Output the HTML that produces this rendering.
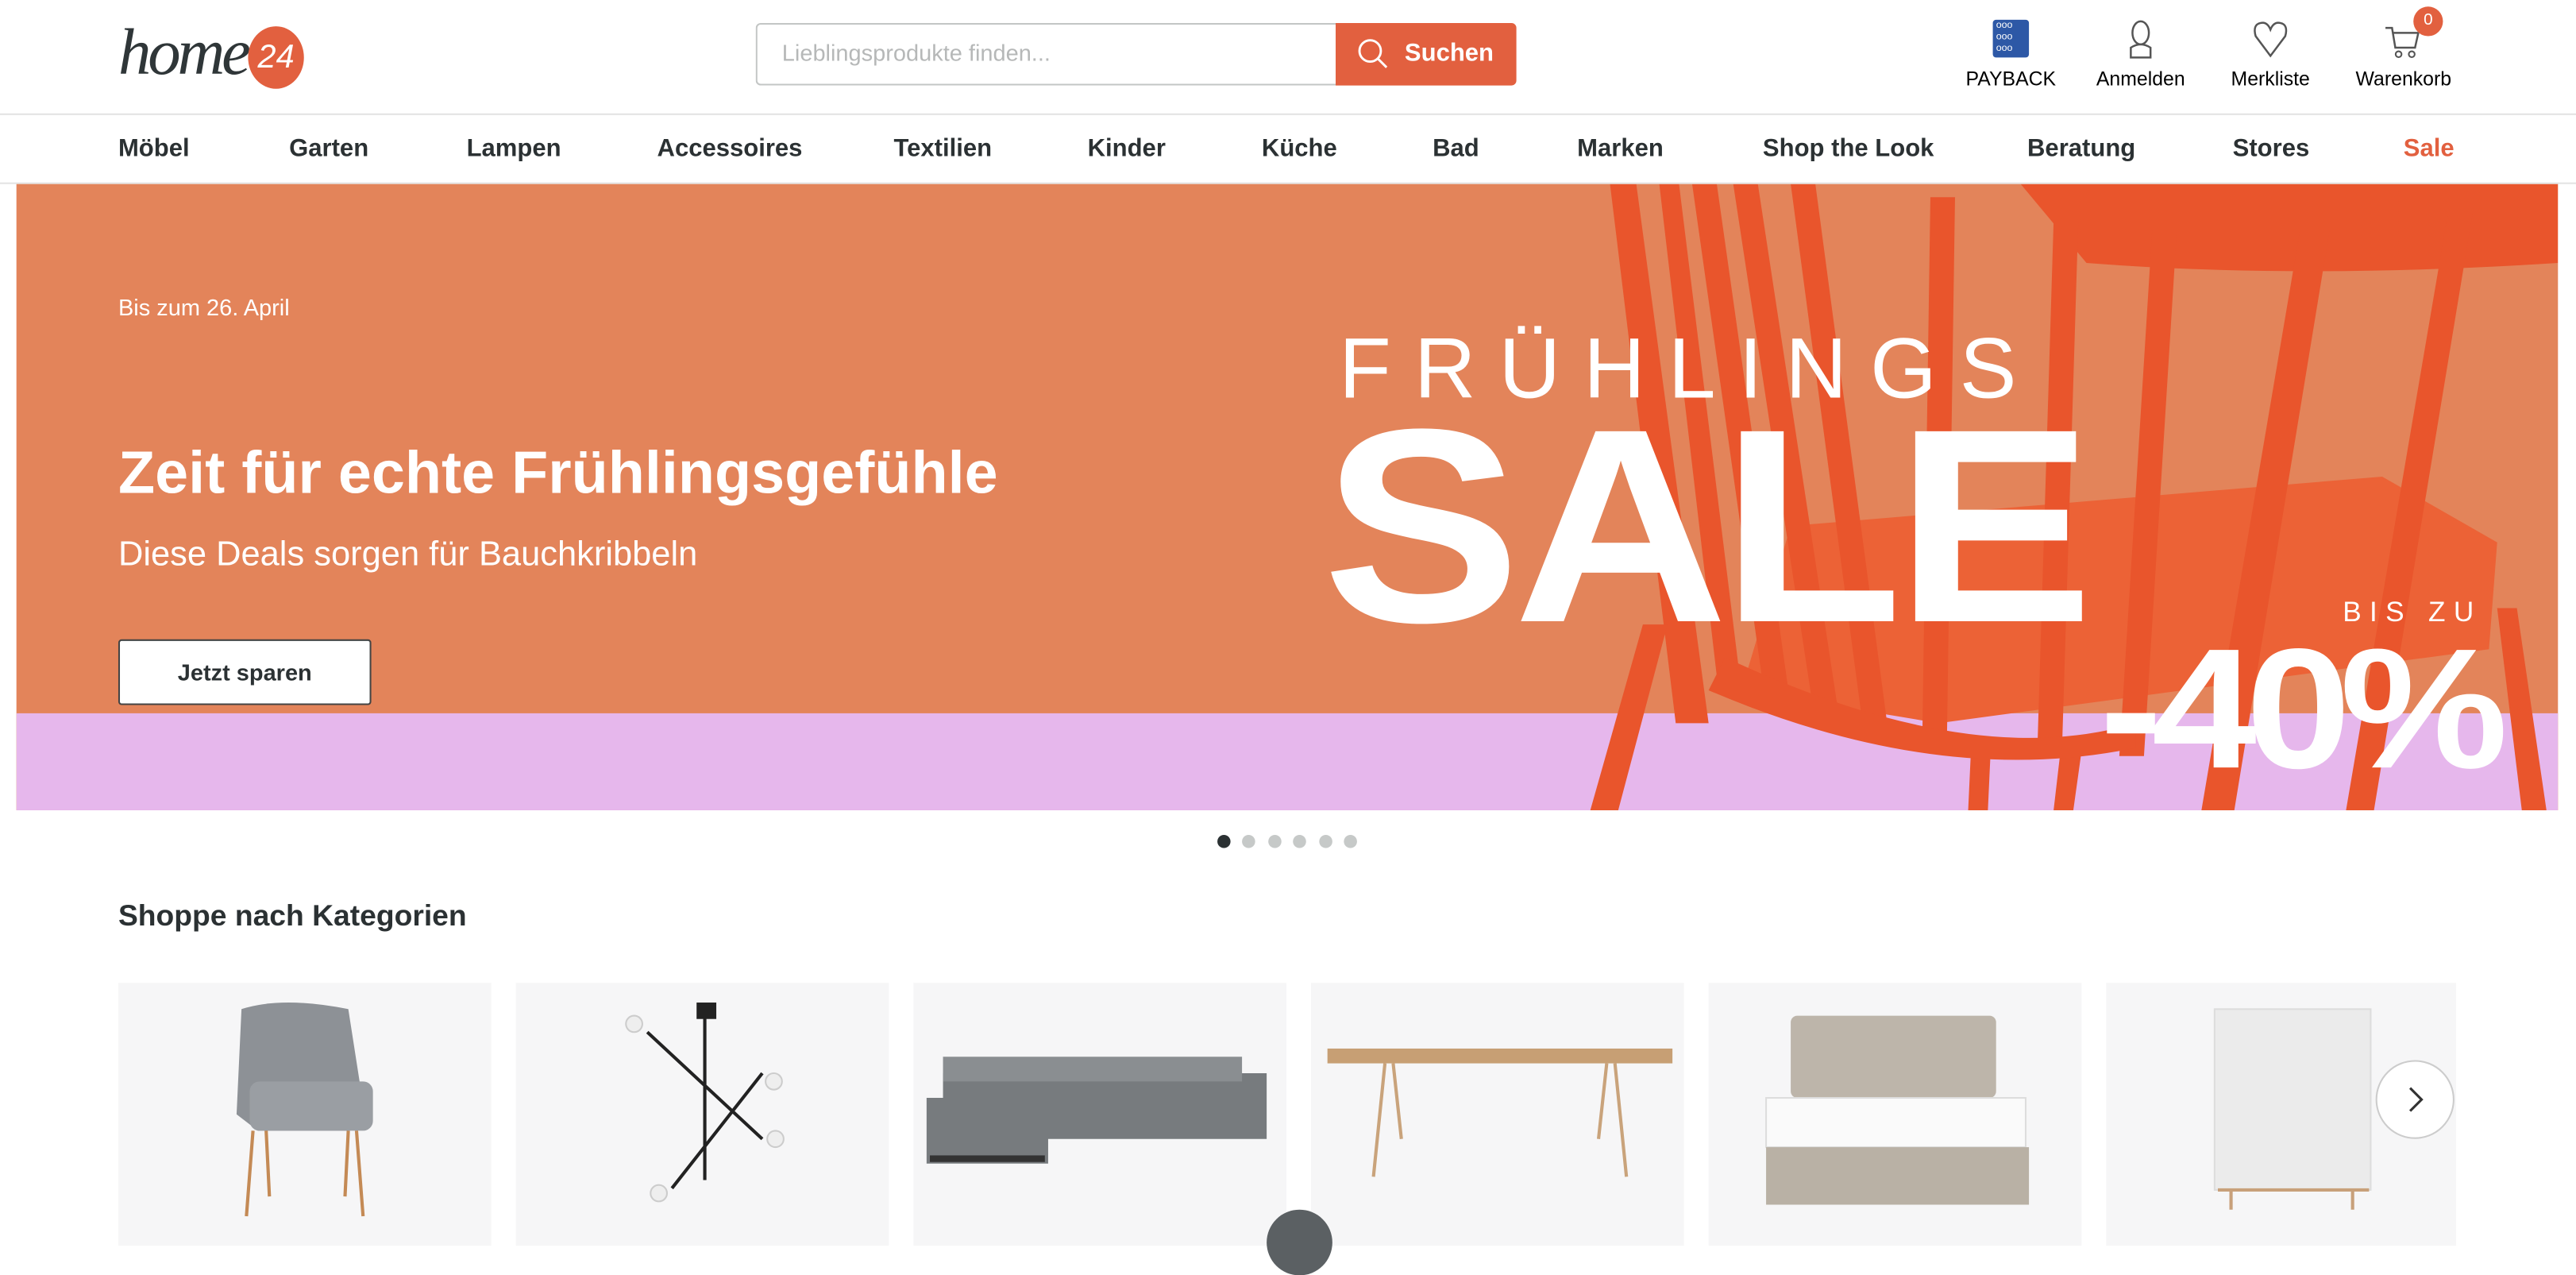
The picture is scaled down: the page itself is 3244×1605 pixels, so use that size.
<!DOCTYPE html>
<html><head><meta charset="utf-8">
<style>
html,body{margin:0;padding:0;width:3244px;height:1554px;overflow:hidden;background:#fff}
#w{position:absolute;left:0;top:0;width:1568px;height:751px;transform:scale(2.0689);transform-origin:0 0;font-family:"Liberation Sans",sans-serif;color:#2b3133}
.a{position:absolute}
.nav span{position:absolute;top:82px;font-weight:bold;font-size:15px;color:#2b3133}
.ic{position:absolute;top:41px;font-size:12px;color:#000;transform:translateX(-50%);white-space:nowrap}
.card{position:absolute;top:598px;height:160px;background:#f6f6f7}
</style></head><body><div id="w">
<div class="a" style="left:72px;top:10px;font-family:'Liberation Serif',serif;font-style:italic;font-size:40px;letter-spacing:-2px;color:#2f3638;line-height:44px">home</div>
<div class="a" style="left:151px;top:16px;width:34px;height:38px;border-radius:50%;background:#e2603f;color:#fff;font-style:italic;font-size:20px;text-align:center;line-height:38px">24</div>
<div class="a" style="left:460px;top:14px;width:352px;height:36px;border:1px solid #c3c6c5;border-right:none;border-radius:3px 0 0 3px"></div>
<div class="a" style="left:476px;top:24px;font-size:14px;color:#b6b8b8">Lieblingsprodukte finden...</div>
<div class="a" style="left:813px;top:14px;width:110px;height:38px;background:#e2603f;border-radius:0 3px 3px 0"></div>
<svg class="a" style="left:826px;top:23px" width="20" height="20" viewBox="0 0 20 20"><circle cx="8" cy="8" r="6.5" fill="none" stroke="#fff" stroke-width="1.4"/><path d="M12.5 12.5L18 18" stroke="#fff" stroke-width="1.4"/></svg>
<div class="a" style="left:855px;top:24px;font-size:15px;font-weight:bold;color:#fff">Suchen</div>
<div class="a" style="left:1213px;top:12px;width:22px;height:23px;background:#2d58a6;border-radius:2px"></div>
<div class="a" style="left:1215px;top:13px;font-size:6px;color:#fff;line-height:7px;letter-spacing:0">ooo<br>ooo<br>ooo</div>
<svg class="a" style="left:1293px;top:12px" width="20" height="24" viewBox="0 0 20 24"><ellipse cx="10" cy="8" rx="5" ry="7" fill="none" stroke="#555" stroke-width="1.2"/><path d="M4 23V17Q10 13 16 17V23Z" fill="none" stroke="#555" stroke-width="1.2"/></svg>
<svg class="a" style="left:1370px;top:12px" width="24" height="24" viewBox="0 0 24 24"><path d="M12 22L3 10Q1 3 6 2Q10 1 12 6Q14 1 18 2Q23 3 21 10Z" fill="none" stroke="#555" stroke-width="1.2"/></svg>
<svg class="a" style="left:1450px;top:14px" width="26" height="22" viewBox="0 0 26 22"><path d="M2 3H6L8 15H20L22 6H7" fill="none" stroke="#555" stroke-width="1.2"/><circle cx="10" cy="19" r="1.8" fill="none" stroke="#555"/><circle cx="18" cy="19" r="1.8" fill="none" stroke="#555"/></svg>
<div class="a" style="left:1469px;top:4px;width:18px;height:18px;border-radius:50%;background:#e2603f;color:#fff;font-size:10px;text-align:center;line-height:18px">0</div>
<div class="ic" style="left:1224px">PAYBACK</div>
<div class="ic" style="left:1303px">Anmelden</div>
<div class="ic" style="left:1382px">Merkliste</div>
<div class="ic" style="left:1463px">Warenkorb</div>
<div class="a" style="left:0;top:69px;width:1568px;height:1px;background:#e3e3e3"></div>
<div class="nav">
<span style="left:72px">Möbel</span><span style="left:176px">Garten</span><span style="left:284px">Lampen</span><span style="left:400px">Accessoires</span><span style="left:544px">Textilien</span><span style="left:662px">Kinder</span><span style="left:768px">Küche</span><span style="left:872px">Bad</span><span style="left:960px">Marken</span><span style="left:1073px">Shop the Look</span><span style="left:1234px">Beratung</span><span style="left:1359px">Stores</span><span style="left:1463px;color:#e2603f">Sale</span>
</div>
<div class="a" style="left:0;top:111px;width:1568px;height:1px;background:#e3e3e3"></div>
<div class="a" style="left:10px;top:112px;width:1547px;height:381px;background:#e3845a;overflow:hidden">
<div class="a" style="left:0;top:322px;width:1547px;height:59px;background:#e6b7ec"></div>
<svg class="a" style="left:0;top:0" width="1547" height="381" viewBox="10 112 1547 381">
<g fill="#e9552c">
<path d="M1230 112H1557V160Q1400 170 1270 160Z"/>
<path d="M1090 320L1450 290L1520 330L1515 395L1180 440L1060 420Z" fill="#ec6236"/>
<path d="M980 112H996L1040 440H1020Z"/><path d="M1010 112H1022L1060 420H1046Z"/>
<path d="M1030 112H1045L1090 430H1075Z"/><path d="M1055 112H1070L1120 440H1105Z"/>
<path d="M1090 112H1105L1150 450H1135Z"/><path d="M1175 120H1190L1185 455H1170Z"/>
<path d="M1250 135H1265L1255 460H1240Z"/><path d="M1310 140H1325L1305 460H1290Z"/>
<path d="M1400 140H1418L1360 493H1340Z"/><path d="M1490 130H1505L1445 493H1428Z"/>
<path d="M1000 380H1015L985 493H968Z"/><path d="M1520 370H1532L1550 493H1535Z"/>
<path d="M1200 450H1212L1210 493H1198Z"/><path d="M1255 450H1268L1262 493H1250Z"/>
<path d="M1050 400Q1200 470 1300 440L1300 455Q1180 480 1040 420Z"/>
</g>
<g fill="#fff" font-family="Liberation Sans,sans-serif">
<text x="815" y="242" font-size="52" letter-spacing="14">FRÜHLINGS</text>
<text x="805" y="378" font-size="168" font-weight="bold" letter-spacing="-4" textLength="465" lengthAdjust="spacingAndGlyphs">SALE</text>
<text x="1426" y="378" font-size="17" letter-spacing="5">BIS ZU</text>
<text x="1278" y="467" font-size="104" font-weight="bold" letter-spacing="-6" textLength="242" lengthAdjust="spacingAndGlyphs">-40%</text>
</g>
</svg>
<div class="a" style="left:62px;top:67px;font-size:14px;color:#fff">Bis zum 26. April</div>
<div class="a" style="left:62px;top:155px;font-size:36.5px;font-weight:bold;color:#fff;white-space:nowrap">Zeit für echte Frühlingsgefühle</div>
<div class="a" style="left:62px;top:214px;font-size:21px;color:#fff">Diese Deals sorgen für Bauchkribbeln</div>
<div class="a" style="left:62px;top:277px;width:152px;height:38px;background:#fff;border:1px solid #444;border-radius:2px;text-align:center;line-height:38px;font-size:14px;font-weight:bold">Jetzt sparen</div>
</div>
<div class="a" style="left:741px;top:508px;width:8px;height:8px;border-radius:50%;background:#2b3133"></div>
<div class="a" style="left:756px;top:508px;width:8px;height:8px;border-radius:50%;background:#c6c9c8"></div>
<div class="a" style="left:772px;top:508px;width:8px;height:8px;border-radius:50%;background:#c6c9c8"></div>
<div class="a" style="left:787px;top:508px;width:8px;height:8px;border-radius:50%;background:#c6c9c8"></div>
<div class="a" style="left:803px;top:508px;width:8px;height:8px;border-radius:50%;background:#c6c9c8"></div>
<div class="a" style="left:818px;top:508px;width:8px;height:8px;border-radius:50%;background:#c6c9c8"></div>
<div class="a" style="left:72px;top:547px;font-size:18px;font-weight:bold">Shoppe nach Kategorien</div>
<div class="card" style="left:72px;width:227px"><svg width="227" height="160"><path d="M75 16Q100 8 140 16L150 80L140 90H85L72 80Z" fill="#8d9196"/><rect x="80" y="60" width="75" height="30" rx="6" fill="#9a9ea3"/><path d="M82 90L78 142M145 90L149 142M90 90L92 130M140 90L138 130" stroke="#c48a55" stroke-width="2"/></svg></div>
<div class="card" style="left:314px;width:227px"><svg width="227" height="160"><path d="M115 15V120M80 30L150 95M150 55L95 125" stroke="#222" stroke-width="2"/><rect x="110" y="12" width="12" height="10" fill="#222"/><circle cx="72" cy="25" r="5" fill="#eee" stroke="#ccc"/><circle cx="157" cy="60" r="5" fill="#eee" stroke="#ccc"/><circle cx="158" cy="95" r="5" fill="#eee" stroke="#ccc"/><circle cx="87" cy="128" r="5" fill="#eee" stroke="#ccc"/></svg></div>
<div class="card" style="left:556px;width:227px"><svg width="227" height="160"><path d="M18 55H215V95H82V110H8V70H18Z" fill="#777b7e"/><path d="M18 45H200V60H18Z" fill="#8a8e91"/><rect x="10" y="105" width="70" height="4" fill="#333"/></svg></div>
<div class="card" style="left:798px;width:227px"><svg width="227" height="160"><rect x="10" y="40" width="210" height="9" fill="#c79f74"/><path d="M45 49L38 118M185 49L192 118M50 49L55 95M180 49L175 95" stroke="#c9a37b" stroke-width="2"/></svg></div>
<div class="card" style="left:1040px;width:227px"><svg width="227" height="160"><rect x="50" y="20" width="125" height="50" rx="4" fill="#bdb5aa"/><rect x="35" y="70" width="158" height="30" fill="#fafafa" stroke="#ddd"/><rect x="35" y="100" width="160" height="35" fill="#b9b1a5"/></svg></div>
<div class="card" style="left:1282px;width:213px"><svg width="213" height="160"><rect x="66" y="16" width="95" height="110" fill="#ebebeb" stroke="#ddd"/><path d="M76 126V138M150 126V138M68 126H160" stroke="#c8a07a" stroke-width="2"/></svg></div>
<div class="a" style="left:1446px;top:645px;width:46px;height:46px;border-radius:50%;background:#fff;border:1px solid #ccc"></div>
<svg class="a" style="left:1463px;top:660px" width="14" height="18"><path d="M4 2L11 9L4 16" fill="none" stroke="#333" stroke-width="1.5"/></svg>
<div class="a" style="left:771px;top:736px;width:40px;height:40px;border-radius:50%;background:#5b6063"></div>
</div></body></html>
